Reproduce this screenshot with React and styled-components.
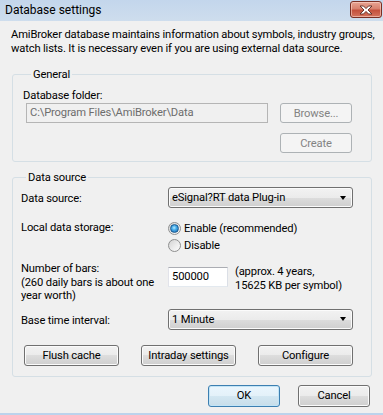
import React from 'react';
import styled, { createGlobalStyle, css } from 'styled-components';

const FONT = `"Roboto", "Noto Sans", "Liberation Sans", sans-serif`;

const Global = createGlobalStyle`
  html, body { margin: 0; padding: 0; background: #f0f0f0; }
  body { font-family: ${FONT}; font-size: 11.2px; letter-spacing: -0.15px; color: #000; }
  * { box-sizing: border-box; }
`;

const Window = styled.div`
  width: 383px;
  height: 415px;
  display: flex;
  flex-direction: column;
  background: #f0f0f0;
  overflow: hidden;
`;

const TitleBar = styled.div`
  height: 21px;
  flex: none;
  display: flex;
  align-items: flex-start;
  justify-content: space-between;
  padding-left: 5px;
  background: linear-gradient(#c3d6ec, #cedded);
`;

const Title = styled.div`
  font-size: 12px;
  letter-spacing: 0;
  line-height: 21px;
  color: #000;
`;

const CloseButton = styled.div`
  width: 32px;
  height: 17px;
  margin: 1px 1px 0 0;
  border: 1px solid #7a2f24;
  border-radius: 3px;
  background: linear-gradient(#e8a594 0%, #d8816e 45%, #c4503c 55%, #d5745e 100%);
  box-shadow: inset 0 0 0 1px rgba(255, 220, 210, 0.55);
  display: flex;
  align-items: center;
  justify-content: center;
`;

const Body = styled.div`
  flex: 1;
  display: flex;
  flex-direction: column;
  padding: 0 11px 0 12px;
`;

const Description = styled.p`
  margin: 7px 0 0 -1px;
  line-height: 14px;
  white-space: nowrap;
`;

const GroupBox = styled.fieldset`
  margin: ${p => p.$top}px 0 0 0;
  min-width: 0;
  border: 1px solid #d5dfe5;
  border-radius: 3px;
  padding: ${p => p.$pad};
`;

const Legend = styled.legend`
  padding: 0 2px;
  margin-left: 5px;
  line-height: 15px;
`;

const FieldLabel = styled.div`
  line-height: 15px;
  white-space: nowrap;
  margin-left: ${p => p.$indent || 0}px;
  padding-top: ${p => p.$pt || 0}px;
`;

const Row = styled.div`
  display: flex;
  align-items: ${p => p.$align || 'center'};
  gap: ${p => p.$gap || 0}px;
  margin-top: ${p => p.$mt || 0}px;
  justify-content: ${p => p.$justify || 'flex-start'};
  padding-right: ${p => p.$pr || 0}px;
`;

const TextBox = styled.div`
  width: ${p => p.$w}px;
  height: 20px;
  margin-top: ${p => p.$mt || 0}px;
  border: 1px solid #abadb3;
  border-color: #abadb3 #dbdfe6 #e3e9ef #e2e3ea;
  background: #fff;
  padding: 0 3px;
  line-height: 18px;
  color: #000;
  white-space: nowrap;
  overflow: hidden;
  ${p => p.$disabled && css`
    background: #f0f0f0;
    border-color: #b5b5b5;
    color: #6d6d6d;
  `}
`;

const Button = styled.button`
  font: inherit;
  letter-spacing: inherit;
  color: #000;
  width: ${p => p.$w || 72}px;
  height: ${p => p.$h || 21}px;
  padding: 0;
  border: 1px solid #707070;
  border-radius: 3px;
  background: linear-gradient(#f2f2f2 0%, #ebebeb 50%, #dddddd 50%, #cfcfcf 100%);
  box-shadow: inset 0 0 0 1px #fbfbfb;
  line-height: 17px;
  white-space: nowrap;
  ${p => p.disabled && css`
    color: #838383;
    border-color: #adb2b5;
    background: #f4f4f4;
    box-shadow: none;
  `}
  ${p => p.$default && css`
    border-color: #3c7fb1;
    box-shadow: inset 0 0 0 1px #c2e4f6;
    background: linear-gradient(#eaf6fd 0%, #e3f1f9 50%, #d3e7f2 50%, #c7dde9 100%);
  `}
`;

const Combo = styled.div`
  width: ${p => p.$w || 185}px;
  height: 21px;
  border: 1px solid #707070;
  border-radius: 3px;
  background: linear-gradient(#f2f2f2 0%, #ebebeb 50%, #dddddd 50%, #cfcfcf 100%);
  box-shadow: inset 0 0 0 1px #fbfbfb;
  display: flex;
  align-items: center;
  justify-content: space-between;
  padding: 0 4px 0 3px;
  line-height: 17px;
  white-space: nowrap;
`;

const Arrow = styled.span`
  width: 0;
  height: 0;
  border-left: 3.5px solid transparent;
  border-right: 3.5px solid transparent;
  border-top: 4px solid #000;
  margin-right: 2px;
`;

const Grid = styled.div`
  display: grid;
  grid-template-columns: 147px 1fr;
  align-items: ${p => p.$align || 'center'};
  margin-top: ${p => p.$mt || 0}px;
`;

const RadioList = styled.div`
  display: flex;
  flex-direction: column;
`;

const RadioItem = styled.label`
  display: flex;
  align-items: center;
  height: 17px;
  gap: 3px;
  white-space: nowrap;
`;

const RadioCircle = styled.span`
  width: 13px;
  height: 13px;
  border-radius: 50%;
  border: 1px solid #8e8f8f;
  background: linear-gradient(135deg, #d2d2d2 0%, #ececec 55%, #fbfbfb 100%);
  display: flex;
  align-items: center;
  justify-content: center;
  flex: none;
  &::after {
    content: '';
    display: ${p => (p.$checked ? 'block' : 'none')};
    width: 7px;
    height: 7px;
    border-radius: 50%;
    border: 1px solid #1d5a8e;
    background: radial-gradient(circle at 45% 40%, #b6ecff 0%, #43a9e8 40%, #1661a8 100%);
  }
`;

const BarsLabel = styled.div`
  width: 147px;
  line-height: 13.5px;
  flex: none;
  white-space: nowrap;
`;

const Note = styled.div`
  line-height: 14px;
  margin-left: 7px;
  margin-top: 3px;
  white-space: nowrap;
`;

const ButtonRow = styled.div`
  display: flex;
  justify-content: space-between;
  width: 329px;
  margin: 15px 0 0 3px;
`;

const Footer = styled.div`
  display: flex;
  justify-content: flex-end;
  gap: 18px;
  margin: 8px 2px 0 0;
`;

const BottomEdge = styled.div`
  height: 2px;
  flex: none;
  background: #bcd3ec;
`;

function CloseGlyph() {
  return (
    <svg width="14" height="10" viewBox="0 0 14 10">
      <path
        d="M1 1 H4.5 L7 3.6 L9.5 1 H13 L9 5 L13 9 H9.5 L7 6.4 L4.5 9 H1 L5 5 Z"
        fill="#fff"
        stroke="#5a2a22"
        strokeWidth="0.9"
        strokeLinejoin="round"
      />
    </svg>
  );
}

export default function App() {
  return (
    <Window>
      <Global />
      <TitleBar>
        <Title>Database settings</Title>
        <CloseButton>
          <CloseGlyph />
        </CloseButton>
      </TitleBar>
      <Body>
        <Description>
          AmiBroker database maintains information about symbols, industry groups,
          <br />
          watch lists. It is necessary even if you are using external data source.
        </Description>

        <GroupBox $top={11} $pad="6px 0 8px 13px">
          <Legend>General</Legend>
          <FieldLabel $indent={-3}>Database folder:</FieldLabel>
          <Row $gap={12}>
            <TextBox $w={242} $disabled>C:\Program Files\AmiBroker\Data</TextBox>
            <Button $w={72} $h={20} disabled>Browse...</Button>
          </Row>
          <Row $mt={10} $justify="flex-end" $pr={19}>
            <Button $w={72} $h={20} disabled>Create</Button>
          </Row>
        </GroupBox>

        <GroupBox $top={8} $pad="2px 0 10px 8px">
          <Legend>Data source</Legend>
          <Grid>
            <FieldLabel $pt={2}>Data source:</FieldLabel>
            <Combo>
              <span>eSignal?RT data Plug-in</span>
              <Arrow />
            </Combo>
          </Grid>
          <Grid $align="start" $mt={12}>
            <FieldLabel>Local data storage:</FieldLabel>
            <RadioList>
              <RadioItem>
                <RadioCircle $checked />
                Enable (recommended)
              </RadioItem>
              <RadioItem>
                <RadioCircle />
                Disable
              </RadioItem>
            </RadioList>
          </Grid>
          <Row $align="flex-start" $mt={8}>
            <BarsLabel>
              Number of bars:
              <br />
              (260 daily bars is about one
              <br />
              year worth)
            </BarsLabel>
            <TextBox $w={60} $mt={5}>500000</TextBox>
            <Note>
              (approx. 4 years,
              <br />
              15625 KB per symbol)
            </Note>
          </Row>
          <Grid $mt={6}>
            <FieldLabel $pt={2}>Base time interval:</FieldLabel>
            <Combo>
              <span>1 Minute</span>
              <Arrow />
            </Combo>
          </Grid>
          <ButtonRow>
            <Button $w={95}>Flush cache</Button>
            <Button $w={95}>Intraday settings</Button>
            <Button $w={95}>Configure</Button>
          </ButtonRow>
        </GroupBox>

        <Footer>
          <Button $w={72} $h={22} $default>OK</Button>
          <Button $w={72} $h={22}>Cancel</Button>
        </Footer>
      </Body>
      <BottomEdge />
    </Window>
  );
}
